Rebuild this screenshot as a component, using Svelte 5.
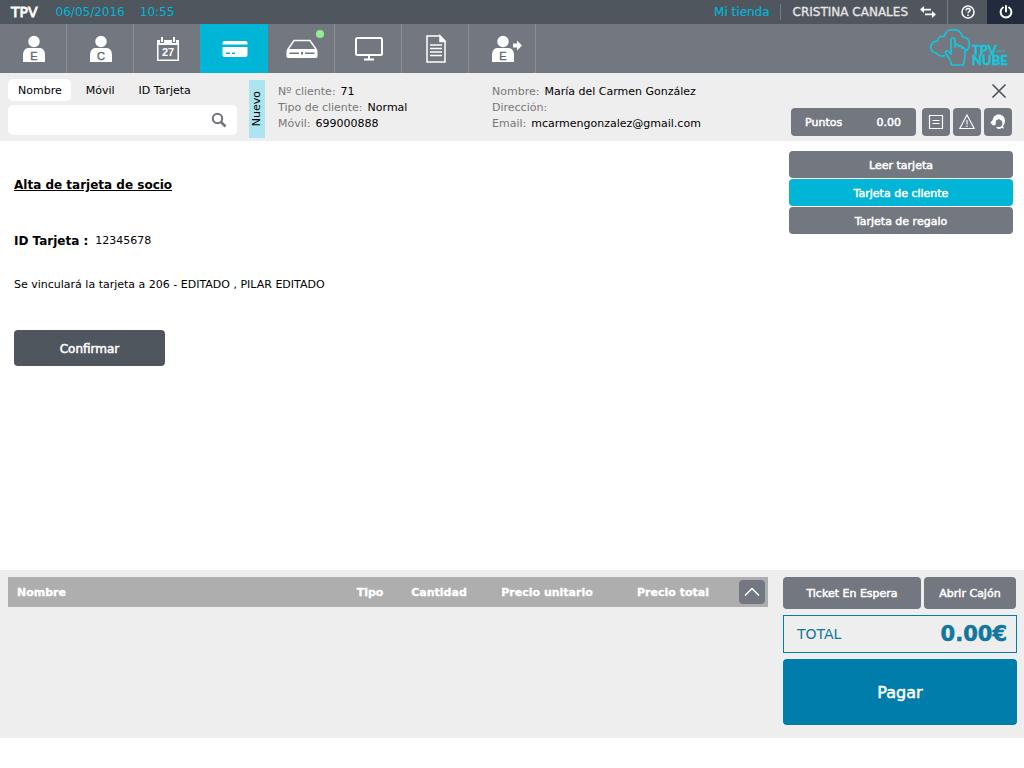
<script lang="ts">
	type NavItem = { icon: string; label: string; letter?: string };

	const navItems: NavItem[] = [
		{ icon: 'person', label: 'Empleado', letter: 'E' },
		{ icon: 'client', label: 'Cliente', letter: 'C' },
		{ icon: 'calendar', label: 'Agenda' },
		{ icon: 'card', label: 'Tarjetas' },
		{ icon: 'drawer', label: 'Caja' },
		{ icon: 'screen', label: 'Pantalla' },
		{ icon: 'document', label: 'Documentos' },
		{ icon: 'exit', label: 'Salida de empleado', letter: 'E' }
	];

	const searchTabs = ['Nombre', 'Móvil', 'ID Tarjeta'];
	const cardOptions = ['Leer tarjeta', 'Tarjeta de cliente', 'Tarjeta de regalo'];

	const clientInfo = [
		[
			{ label: 'Nº cliente:', value: '71' },
			{ label: 'Tipo de cliente:', value: 'Normal' },
			{ label: 'Móvil:', value: '699000888' }
		],
		[
			{ label: 'Nombre:', value: 'María del Carmen González' },
			{ label: 'Dirección:', value: '' },
			{ label: 'Email:', value: 'mcarmengonzalez@gmail.com' }
		]
	];

	let activeNav = $state('card');
	let activeTab = $state('Nombre');
	let activeOption = $state('Tarjeta de cliente');
	let search = $state('');
</script>

<div class="page">
	<header class="topbar">
		<strong class="brand">TPV</strong>
		<span class="date">06/05/2016</span>
		<span class="time">10:55</span>
		<a class="store" href="#tienda">Mi tienda</a>
		<span class="user">CRISTINA CANALES</span>
		<button class="swap" aria-label="Cambiar usuario">
			<svg width="18" height="12" viewBox="0 0 18 12" fill="#fff">
				<path d="M5 0v2.7h7v1.7H5V7L1 3.5zM13 5v2.6H6v1.7h7V12l4-3.5z" />
			</svg>
		</button>
		<button class="help" aria-label="Ayuda">
			<svg width="14" height="14" viewBox="0 0 14 14" fill="none" stroke="#fff" stroke-width="1.5">
				<circle cx="7" cy="7" r="6" />
				<path d="M5 5.4C5.1 3.9 6 3.4 7.1 3.4c1.2 0 2 .7 2 1.7C9.1 6.5 7 6.6 7 8.3M7 9.5V11" />
			</svg>
		</button>
		<button class="power" aria-label="Apagar">
			<svg width="14" height="14" viewBox="0 0 14 14" fill="none" stroke="#fff" stroke-width="2" stroke-linecap="round">
				<path d="M4 2.5a5.4 5.4 0 1 0 6 0M7 1v5.5" />
			</svg>
		</button>
	</header>

	<nav class="navbar">
		{#each navItems as item}
			<button class="nav-item" class:active={activeNav === item.icon} aria-label={item.label} onclick={() => (activeNav = item.icon)}>
				{#if item.letter}
					<svg width="34" height="28" viewBox="0 0 34 28" fill="#fff">
						<circle cx="17" cy="6.5" r="5.7" />
						<path d="M6 27v-6.5c0-5 2-7.5 6-7.5h10c4 0 6 2.5 6 7.5V27z" />
						<text class="letter" x="17" y="25" text-anchor="middle">{item.letter}</text>
						{#if item.icon === 'exit'}
							<path d="M27 8.5h4V5.5l5 5-5 5v-3h-4z" />
						{/if}
					</svg>
				{:else if item.icon === 'calendar'}
					<svg width="24" height="26" viewBox="0 0 24 26" fill="#fff">
						<path fill-rule="evenodd" d="M1 4h3v3h4V4h8v3h4V4h3v21H1zM2.5 9v14.5h19V9z" />
						<path d="M5 1h2v5H5zM17 1h2v5h-2z" />
						<text class="day" x="12" y="20" text-anchor="middle">27</text>
					</svg>
				{:else if item.icon === 'card'}
					<svg width="26" height="18" viewBox="0 0 26 18" fill="#fff">
						<path d="M2.5 1h21q2 0 2 2v1.5H.5V3q0-2 2-2z" />
						<path fill-rule="evenodd" d="M.5 7h25v8q0 2-2 2h-21q-2 0-2-2zM4 12.5V14h4v-1.5zm6 0V14h3v-1.5z" />
					</svg>
				{:else if item.icon === 'drawer'}
					<svg width="32" height="20" viewBox="0 0 32 20" fill="none" stroke="#fff" stroke-width="1.5">
						<path d="M1.5 11 8 1.5h16L30.5 11" />
						<path fill="#fff" fill-rule="evenodd" stroke="none" d="M2.5 10h27q2 0 2 2v5.5q0 1.5-2 1.5h-27q-2 0-2-1.5V12q0-2 2-2zM3.5 13.5V15H13v-1.5zm11.5-.5v2.500h2V13zm4 .5V15h9.500v-1.500z" />
					</svg>
					<span class="status-dot"></span>
				{:else if item.icon === 'screen'}
					<svg width="30" height="25" viewBox="0 0 30 25" fill="none" stroke="#fff" stroke-width="2">
						<rect x="2" y="2" width="26" height="17" rx="1.5" />
						<path d="M15 20v3M10 23.5h10" />
					</svg>
				{:else}
					<svg width="20" height="28" viewBox="0 0 20 28" fill="none" stroke="#fff" stroke-width="1.5">
						<path d="M1 1h13l5 5v21H1z" />
						<path fill="#fff" d="M14 1v5.5h5z" />
						<path d="M4 10h12M4 13.500h12M4 17h12M4 20.500h12" />
					</svg>
				{/if}
			</button>
		{/each}
		<svg class="logo" width="80" height="40" viewBox="0 0 80 40" fill="none" stroke="#11c8dd" stroke-width="1.6" stroke-linejoin="round" role="img" aria-label="TPV en la nube">
			<path d="M15 27.500c-3 1-7 .5-8.500-2.500C2.500 24.500.8 22 .8 19.500c0-3.500 2.700-6.500 6.700-6.500 0-3.500 3-5.500 6.500-4.500 1.500-4.500 5-7 9-7 5 0 8.500 3 9.500 7.500 4.500 0 7 3.500 7 7s-1.500 6-4.500 7" />
			<path d="M21 26V12c0-2.700 4-2.700 4 0v7-1.500c.3-1.700 3.500-1.500 3.500.3v1c.5-1.500 3.300-1.200 3.300.8v.8c.5-1.200 3.200-1 3.200 1.200V28c0 3-1.500 5-1.500 9H21.500c0-3-1.500-5-3-7.500L15.500 25c-.8-2 1.500-2.800 2.800-1.500z" />
			<g class="logo-text">
				<text x="42" y="27">TPV</text>
				<text x="42" y="37">NUBE</text>
				<text class="logo-small" x="67" y="24">en la</text>
			</g>
		</svg>
	</nav>

	<section class="client-bar">
		<form class="search" onsubmit={(e) => e.preventDefault()}>
			<div class="tabs">
				{#each searchTabs as tab}
					<button type="button" class="tab" class:selected={activeTab === tab} onclick={() => (activeTab = tab)}>{tab}</button>
				{/each}
			</div>
			<div class="search-box">
				<input type="text" aria-label="Buscar cliente" bind:value={search} />
				<button aria-label="Buscar">
					<svg width="16" height="16" viewBox="0 0 16 16" fill="none" stroke="#70737b" stroke-width="2">
						<circle cx="6.5" cy="6.5" r="4.7" />
						<path stroke-width="2.5" d="m10 10 4.500 4.500" />
					</svg>
				</button>
			</div>
		</form>
		<button class="new-client"><span>Nuevo</span></button>

		{#each clientInfo as column}
			<dl class="info">
				{#each column as row}
					<div>
						<dt>{row.label}</dt>
						<dd>{row.value}</dd>
					</div>
				{/each}
			</dl>
		{/each}

		<div class="client-actions">
			<button class="close" aria-label="Cerrar">
				<svg width="16" height="16" viewBox="0 0 16 16" fill="none" stroke="#4c525a" stroke-width="1.6">
					<path d="m1.500 1.500 13 13M14.500 1.500l-13 13" />
				</svg>
			</button>
			<div class="tools">
				<button class="points medium"><span>Puntos</span><span>0.00</span></button>
				<button class="tool" aria-label="Notas">
					<svg width="16" height="16" viewBox="0 0 16 16" fill="none" stroke="#fff" stroke-width="1.2">
						<path d="M1.500 1.500h13v13h-13zM4.500 6.500h7M4.500 9.500h7" />
					</svg>
				</button>
				<button class="tool" aria-label="Avisos">
					<svg width="16" height="16" viewBox="0 0 16 16" fill="none" stroke="#fff" stroke-width="1.1">
						<path d="m8 1 7.200 13.500H.8zM8 6v4.500M8 11.500V13" />
					</svg>
				</button>
				<button class="tool" aria-label="Atención al cliente">
					<svg width="16" height="16" viewBox="0 0 16 16" fill="#fff">
						<path fill-rule="evenodd" d="M8.500.5c4 0 6.500 2.700 6.500 6.200 0 2.300-.8 4-2 5.300l1 2.500-2.500-.5c-1.500 1.200-4 1.200-5.500-.2l1.500-1c1.500.6 3.300.2 4.300-1.300 1-1.600.9-3.500-.3-4.700L9 5 6 6.500 5.500 11 3 11.500.3 8.500 2.800 6C3 2.800 5.500.5 8.500.5z" />
					</svg>
				</button>
			</div>
		</div>
	</section>

	<main class="content">
		<section class="card-form">
			<h1>Alta de tarjeta de socio</h1>
			<p class="card-id"><strong>ID Tarjeta :</strong><span>12345678</span></p>
			<p class="link-note">Se vinculará la tarjeta a 206 - EDITADO , PILAR EDITADO</p>
			<button class="confirm medium">Confirmar</button>
		</section>
		<aside class="options">
			{#each cardOptions as option}
				<button class="medium" class:active={activeOption === option} onclick={() => (activeOption = option)}>{option}</button>
			{/each}
		</aside>
	</main>

	<footer class="ticket">
		<table>
			<colgroup>
				<col />
				<col class="col-type" />
				<col class="col-amount" />
				<col class="col-unit" />
				<col class="col-total" />
				<col class="col-toggle" />
			</colgroup>
			<thead>
				<tr>
					<th class="name">Nombre</th>
					<th>Tipo</th>
					<th>Cantidad</th>
					<th>Precio unitario</th>
					<th>Precio total</th>
					<th class="toggle-cell">
						<button class="toggle" aria-label="Desplegar">
							<svg width="16" height="10" viewBox="0 0 16 10" fill="none" stroke="#fff" stroke-width="1.5">
								<path d="m1 8.500 7-7 7 7" />
							</svg>
						</button>
					</th>
				</tr>
			</thead>
			<tbody></tbody>
		</table>
		<div class="payment">
			<div class="payment-actions">
				<button class="medium waiting">Ticket En Espera</button>
				<button class="medium open-drawer">Abrir Cajón</button>
			</div>
			<div class="total"><span>TOTAL</span><strong>0.00€</strong></div>
			<button class="pay medium">Pagar</button>
		</div>
	</footer>
</div>

<style>
	:global(body) {
		margin: 0;
		background: #fff;
	}

	.page {
		display: flex;
		flex-direction: column;
		min-height: 100vh;
		box-sizing: border-box;
		padding-bottom: 30px;
		font-family: Verdana, 'DejaVu Sans', sans-serif;
		font-size: 11px;
		line-height: 16px;
		color: #000;
	}

	button {
		display: flex;
		align-items: center;
		justify-content: center;
		padding: 0;
		border: 0;
		background: none;
		color: inherit;
		font: inherit;
		cursor: pointer;
	}

	svg {
		display: block;
		flex: none;
		overflow: visible;
	}

	.medium {
		padding-top: 2px;
		-webkit-text-stroke: 0.5px currentColor;
	}

	.topbar {
		display: flex;
		align-items: center;
		height: 24px;
		background: #50565e;
		color: #00b5d6;
		font-size: 12px;
	}

	.brand {
		margin: 0 18px 0 11px;
		color: #fff;
		font-size: 14px;
		font-weight: 400;
		-webkit-text-stroke: 0.8px currentColor;
	}

	.date {
		margin-right: 15px;
	}

	.store {
		margin-left: auto;
		padding-right: 10px;
		border-right: 1px solid #777b82;
		color: #00b5d6;
		text-decoration: none;
		-webkit-text-stroke: 0.2px currentColor;
	}

	.user {
		margin-left: 12px;
		color: #e6e6e6;
		-webkit-text-stroke: 0.3px currentColor;
	}

	.swap {
		width: 39px;
		height: 24px;
	}

	.help {
		width: 40px;
		height: 24px;
		box-sizing: border-box;
		border-left: 1px solid #777b82;
	}

	.power {
		width: 37px;
		height: 24px;
		background: #212b3d;
	}

	.navbar {
		display: flex;
		height: 49px;
		background: #737780;
	}

	.nav-item {
		position: relative;
		width: 67px;
		box-sizing: border-box;
		padding-left: 2px;
		border-right: 1px solid #8b8e95;
	}

	.nav-item.active {
		border-color: #00b5d6;
		background: #00b5d6;
		box-shadow: -1px 0 #00b5d6;
	}

	.letter {
		fill: #62666e;
		stroke: #62666e;
		stroke-width: 0.4px;
		font: 400 11px 'Liberation Sans', sans-serif;
	}

	.day {
		font: 700 11px 'Liberation Sans', sans-serif;
	}

	.status-dot {
		position: absolute;
		top: 6px;
		right: 10px;
		width: 8px;
		height: 8px;
		border-radius: 50%;
		background: #90ee90;
	}

	.logo {
		margin: 4px 14px 0 auto;
	}

	.logo-text {
		fill: #11c8dd;
		stroke: #11c8dd;
		stroke-width: 0.5px;
		font: 700 13px Lato, sans-serif;
	}

	.logo-small {
		stroke: none;
		font-size: 4px;
		font-weight: 400;
	}

	.client-bar {
		display: flex;
		box-sizing: border-box;
		min-height: 68px;
		padding: 6px 12px 3px 8px;
		background: #eee;
	}

	.search {
		width: 229px;
	}

	.tabs {
		display: flex;
		gap: 5px;
	}

	.tab {
		height: 22px;
		padding: 2px 9px 0 10px;
		border-radius: 5px;
	}

	.tab.selected {
		background: #fff;
	}

	.search-box {
		display: flex;
		height: 30px;
		margin-top: 4px;
		border-radius: 5px;
		background: #fff;
	}

	.search-box input {
		flex: 1;
		min-width: 0;
		padding: 0 8px;
		border: 0;
		background: none;
		font: inherit;
	}

	.search-box button {
		width: 36px;
	}

	.new-client {
		width: 16px;
		height: 58px;
		margin: 1px 13px 0 12px;
		background: #ace5f0;
	}

	.new-client span {
		writing-mode: vertical-rl;
		transform: rotate(180deg);
	}

	.info {
		width: 214px;
		margin: 5px 0 0;
		white-space: nowrap;
	}

	.info div {
		display: flex;
		gap: 5px;
	}

	.info dt {
		color: #777;
	}

	.info dd {
		margin: 0;
	}

	.client-actions {
		display: flex;
		flex-direction: column;
		align-items: flex-end;
		gap: 9px;
		margin: 4px 0 0 auto;
	}

	.close {
		width: 16px;
		height: 16px;
		margin-right: 5px;
	}

	.tools {
		display: flex;
		gap: 3px;
	}

	.points,
	.tool {
		height: 28px;
		border-radius: 4px;
		background: #737780;
		color: #fff;
	}

	.points {
		justify-content: space-between;
		width: 125px;
		margin-right: 3px;
		padding-right: 15px;
		padding-left: 14px;
	}

	.tool {
		width: 28px;
	}

	.content {
		display: flex;
		flex: 1;
		justify-content: space-between;
		padding: 10px 11px 10px 14px;
	}

	h1 {
		margin: 26px 0 0;
		font-size: 12px;
		line-height: 16px;
		text-decoration: underline;
	}

	.card-id {
		display: flex;
		gap: 7px;
		margin: 40px 0 0;
	}

	.card-id strong {
		font-size: 12px;
	}

	.link-note {
		margin: 28px 0 0;
	}

	.confirm {
		width: 151px;
		height: 36px;
		margin-top: 37px;
		border-radius: 4px;
		background: #50565e;
		color: #fff;
		font-size: 12px;
	}

	.options {
		display: flex;
		flex-direction: column;
		gap: 1px;
		width: 224px;
	}

	.options button {
		height: 27px;
		border-radius: 4px;
		background: #737780;
		color: #fff;
	}

	.options .active {
		background: #00b5d6;
	}

	.ticket {
		display: flex;
		gap: 15px;
		align-items: flex-start;
		padding: 7px 7px 13px 8px;
		background: #eee;
	}

	table {
		flex: 1;
		width: 0;
		table-layout: fixed;
		border-collapse: collapse;
		background: #aeaeae;
		color: #fff;
	}

	th {
		height: 28px;
		padding: 2px 0 0;
		white-space: nowrap;
		-webkit-text-stroke: 0.3px currentColor;
	}

	.name {
		padding-left: 9px;
		text-align: left;
	}

	.toggle-cell {
		padding-top: 0;
	}

	.col-type {
		width: 60px;
	}

	.col-amount {
		width: 78px;
	}

	.col-unit {
		width: 138px;
	}

	.col-total {
		width: 114px;
	}

	.col-toggle {
		width: 38px;
	}

	.toggle {
		width: 26px;
		height: 24px;
		margin: 0 3px 0 auto;
		border-radius: 4px;
		background: #737780;
	}

	.payment {
		width: 234px;
	}

	.payment-actions {
		display: flex;
		gap: 3px;
	}

	.payment-actions button {
		height: 32px;
		border-radius: 4px;
		background: #737780;
		color: #fff;
	}

	.waiting {
		width: 138px;
	}

	.open-drawer {
		width: 92px;
	}

	.total {
		display: flex;
		align-items: center;
		justify-content: space-between;
		height: 36px;
		margin: 6px 0;
		padding: 0 9px 0 13px;
		border: 1px solid #007dab;
		color: #12779f;
		font-size: 14px;
	}

	.total strong {
		font-size: 21px;
		-webkit-text-stroke: 0.5px currentColor;
	}

	.pay {
		width: 100%;
		height: 66px;
		border-radius: 4px;
		background: #007dab;
		color: #fff;
		font-size: 16px;
	}
</style>
